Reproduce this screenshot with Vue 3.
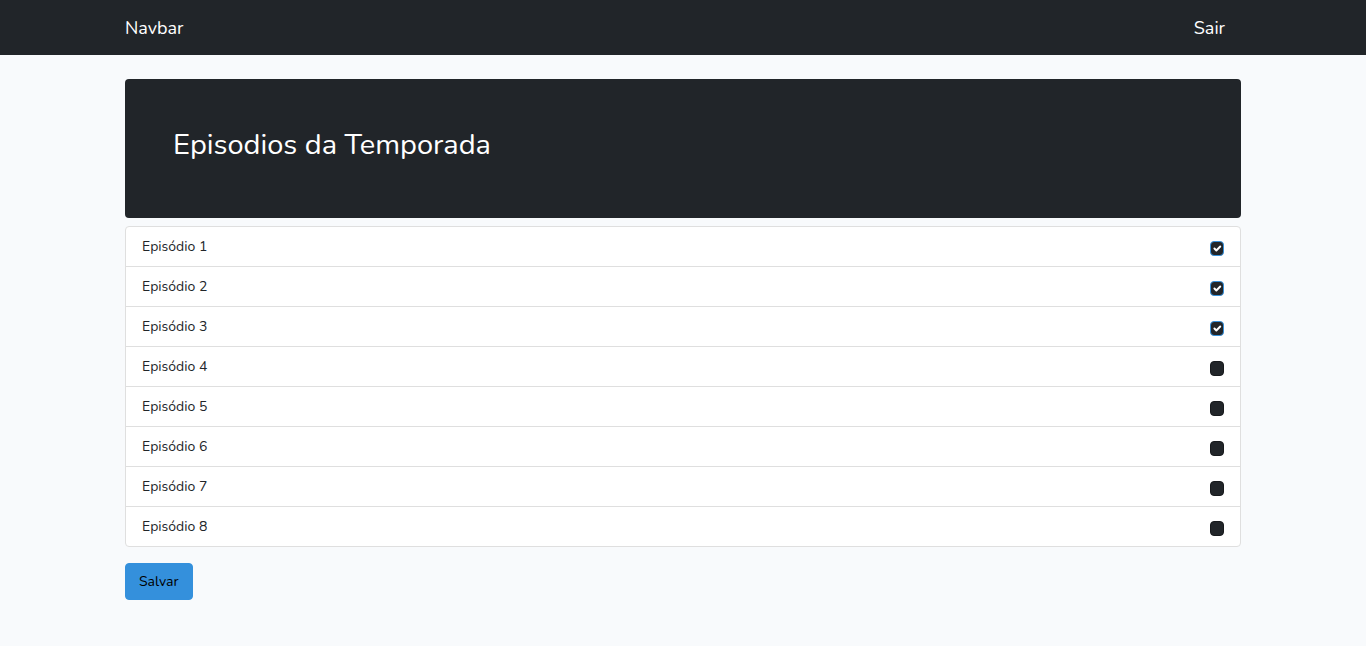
<script setup>
import { ref } from 'vue'

const episodes = ref(
  Array.from({ length: 8 }, (_, i) => ({ number: i + 1, watched: i < 3 }))
)
</script>

<template>
  <nav class="navbar">
    <div class="container navbar-inner">
      <a class="brand" href="#">Navbar</a>
      <a class="logout" href="#">Sair</a>
    </div>
  </nav>

  <main class="container content">
    <header class="jumbotron">
      <h1>Episodios da Temporada</h1>
    </header>

    <form @submit.prevent>
      <ul class="list">
        <li v-for="episode in episodes" :key="episode.number" class="item">
          <label :for="`episode-${episode.number}`">Episódio {{ episode.number }}</label>
          <input
            :id="`episode-${episode.number}`"
            v-model="episode.watched"
            class="check"
            type="checkbox"
          />
          <svg class="tick" viewBox="0 0 20 20" aria-hidden="true">
            <path d="M6 10l3 3l6-6" />
          </svg>
        </li>
      </ul>
      <button class="save" type="submit">Salvar</button>
    </form>
  </main>
</template>

<style>
body {
  margin: 0;
  background: #f8fafc;
  color: #212529;
  font-family: Nunito, Lato, sans-serif;
  font-size: 14px;
  line-height: 23px;
}
</style>

<style scoped>
* {
  box-sizing: border-box;
}

.container {
  max-width: 1140px;
  margin: 0 auto;
  padding: 0 12px;
}

.navbar {
  background: #212529;
  padding: 8px 0;
}

.navbar-inner {
  display: flex;
  align-items: center;
  justify-content: space-between;
}

.brand,
.logout {
  padding: 7px 0 5px;
  color: #fff;
  font-size: 18px;
  line-height: 27px;
  text-decoration: none;
}

.logout {
  margin-right: 16px;
}

.content {
  padding-top: 24px;
  padding-bottom: 24px;
}

.jumbotron {
  margin-bottom: 8px;
  padding: 48px;
  border-radius: 4px;
  background: #212529;
  color: #fff;
}

h1 {
  margin: 0 0 8px;
  font-size: 29px;
  font-weight: 400;
  line-height: 35px;
}

.list {
  margin: 0 0 16px;
  padding: 0;
  border: 1px solid #dfdfdf;
  border-radius: 4px;
  background: #fff;
  list-style: none;
}

.item {
  position: relative;
  display: flex;
  align-items: center;
  justify-content: space-between;
  height: 40px;
  padding: 2px 16px 0;
  border-bottom: 1px solid #dfdfdf;
}

.item:last-child {
  height: 39px;
  border-bottom: 0;
}

.item label {
  padding-bottom: 2px;
}

.check {
  appearance: none;
  width: 14px;
  height: 15px;
  margin: 2px 0 0;
  border: 1px solid #16191c;
  border-radius: 4px;
  background: #212529;
}

.check:checked {
  border-color: #3490dc;
}

.tick {
  display: none;
  position: absolute;
  top: 15px;
  right: 16px;
  width: 14px;
  height: 13px;
  fill: none;
  stroke: #fff;
  stroke-width: 3;
  stroke-linecap: round;
  stroke-linejoin: round;
  pointer-events: none;
}

.check:checked + .tick {
  display: block;
}

.save {
  display: block;
  padding: 6px 13px;
  border: 1px solid #3490dc;
  border-radius: 4px;
  background: #3490dc;
  color: #000;
  font: inherit;
}
</style>
